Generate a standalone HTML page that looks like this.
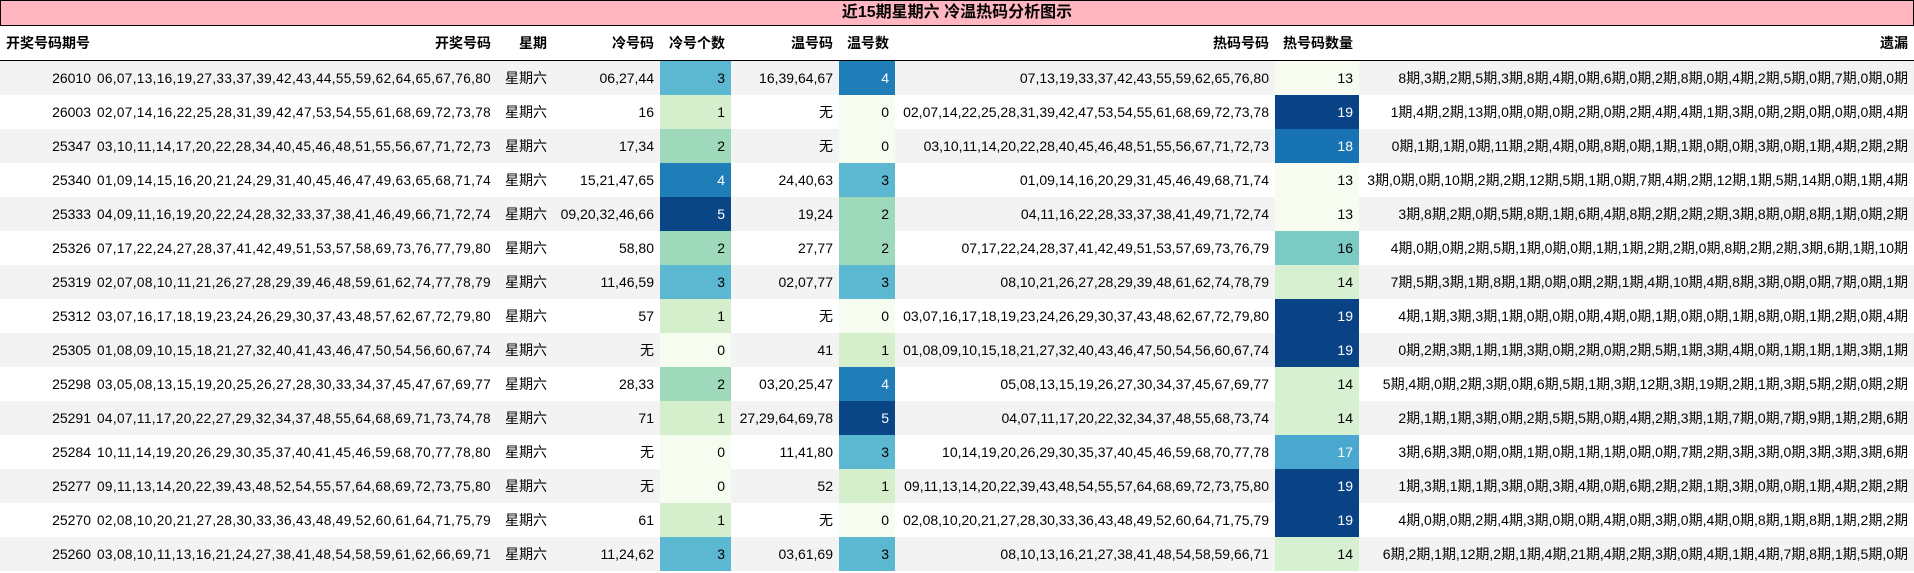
<!DOCTYPE html>
<html><head><meta charset="utf-8"><style>
html,body{margin:0;padding:0;background:#fff;width:1914px;height:573px;overflow:hidden}
body{font-family:"Liberation Sans","Noto Sans CJK SC",sans-serif;font-size:14px;color:#000}
.title{position:absolute;left:0;top:0;width:1912px;height:24px;background:#ffb6c1;border:1px solid #000;text-align:center;font-weight:bold;font-size:16px;line-height:24px}
table{position:absolute;left:0;top:26px;border-collapse:collapse;table-layout:fixed;width:1914px}
th{height:34px;border-bottom:1px solid #000;text-align:right;padding:0 6px 0 0;font-weight:bold;white-space:nowrap}
td{height:34px;padding:0 6px 0 0;text-align:right;white-space:nowrap;overflow:hidden}
tbody tr:nth-child(odd) td{background:#f3f3f3}
td span{display:inline-block;transform-origin:left center}
td.n span{letter-spacing:0.35px}
th:first-child{text-align:left;padding-left:6px}
</style></head><body>
<div class="title">近15期星期六 冷温热码分析图示</div>
<table>
<colgroup><col style="width:97px"><col style="width:400px"><col style="width:56px"><col style="width:107px"><col style="width:71px"><col style="width:108px"><col style="width:56px"><col style="width:380px"><col style="width:84px"><col style="width:555px"></colgroup>
<thead><tr><th>开奖号码期号</th><th>开奖号码</th><th>星期</th><th>冷号码</th><th>冷号个数</th><th>温号码</th><th>温号数</th><th>热码号码</th><th>热号码数量</th><th>遗漏</th></tr></thead>
<tbody id="tb"></tbody></table>
<script>
var C={0:'#f7fcf0',1:'#d5efcd',2:'#9fd9bb',3:'#5bb8d0',4:'#1f7db8',5:'#0a4586'};
var H={13:'#f7fcf0',14:'#d8f0d2',16:'#7bcbc4',17:'#4aa8d0',18:'#1873b4',19:'#094385'};
var D=[
["26010","06,07,13,16,19,27,33,37,39,42,43,44,55,59,62,64,65,67,76,80","06,27,44",3,"16,39,64,67",4,"07,13,19,33,37,42,43,55,59,62,65,76,80",13,"8期,3期,2期,5期,3期,8期,4期,0期,6期,0期,2期,8期,0期,4期,2期,5期,0期,7期,0期,0期"],
["26003","02,07,14,16,22,25,28,31,39,42,47,53,54,55,61,68,69,72,73,78","16",1,"无",0,"02,07,14,22,25,28,31,39,42,47,53,54,55,61,68,69,72,73,78",19,"1期,4期,2期,13期,0期,0期,0期,2期,0期,2期,4期,4期,1期,3期,0期,2期,0期,0期,0期,4期"],
["25347","03,10,11,14,17,20,22,28,34,40,45,46,48,51,55,56,67,71,72,73","17,34",2,"无",0,"03,10,11,14,20,22,28,40,45,46,48,51,55,56,67,71,72,73",18,"0期,1期,1期,0期,11期,2期,4期,0期,8期,0期,1期,1期,0期,0期,3期,0期,1期,4期,2期,2期"],
["25340","01,09,14,15,16,20,21,24,29,31,40,45,46,47,49,63,65,68,71,74","15,21,47,65",4,"24,40,63",3,"01,09,14,16,20,29,31,45,46,49,68,71,74",13,"3期,0期,0期,10期,2期,2期,12期,5期,1期,0期,7期,4期,2期,12期,1期,5期,14期,0期,1期,4期"],
["25333","04,09,11,16,19,20,22,24,28,32,33,37,38,41,46,49,66,71,72,74","09,20,32,46,66",5,"19,24",2,"04,11,16,22,28,33,37,38,41,49,71,72,74",13,"3期,8期,2期,0期,5期,8期,1期,6期,4期,8期,2期,2期,2期,3期,8期,0期,8期,1期,0期,2期"],
["25326","07,17,22,24,27,28,37,41,42,49,51,53,57,58,69,73,76,77,79,80","58,80",2,"27,77",2,"07,17,22,24,28,37,41,42,49,51,53,57,69,73,76,79",16,"4期,0期,0期,2期,5期,1期,0期,0期,1期,1期,2期,2期,0期,8期,2期,2期,3期,6期,1期,10期"],
["25319","02,07,08,10,11,21,26,27,28,29,39,46,48,59,61,62,74,77,78,79","11,46,59",3,"02,07,77",3,"08,10,21,26,27,28,29,39,48,61,62,74,78,79",14,"7期,5期,3期,1期,8期,1期,0期,0期,2期,1期,4期,10期,4期,8期,3期,0期,0期,7期,0期,1期"],
["25312","03,07,16,17,18,19,23,24,26,29,30,37,43,48,57,62,67,72,79,80","57",1,"无",0,"03,07,16,17,18,19,23,24,26,29,30,37,43,48,62,67,72,79,80",19,"4期,1期,3期,3期,1期,0期,0期,0期,4期,0期,1期,0期,0期,1期,8期,0期,1期,2期,0期,4期"],
["25305","01,08,09,10,15,18,21,27,32,40,41,43,46,47,50,54,56,60,67,74","无",0,"41",1,"01,08,09,10,15,18,21,27,32,40,43,46,47,50,54,56,60,67,74",19,"0期,2期,3期,1期,1期,3期,0期,2期,0期,2期,5期,1期,3期,4期,0期,1期,1期,1期,3期,1期"],
["25298","03,05,08,13,15,19,20,25,26,27,28,30,33,34,37,45,47,67,69,77","28,33",2,"03,20,25,47",4,"05,08,13,15,19,26,27,30,34,37,45,67,69,77",14,"5期,4期,0期,2期,3期,0期,6期,5期,1期,3期,12期,3期,19期,2期,1期,3期,5期,2期,0期,2期"],
["25291","04,07,11,17,20,22,27,29,32,34,37,48,55,64,68,69,71,73,74,78","71",1,"27,29,64,69,78",5,"04,07,11,17,20,22,32,34,37,48,55,68,73,74",14,"2期,1期,1期,3期,0期,2期,5期,5期,0期,4期,2期,3期,1期,7期,0期,7期,9期,1期,2期,6期"],
["25284","10,11,14,19,20,26,29,30,35,37,40,41,45,46,59,68,70,77,78,80","无",0,"11,41,80",3,"10,14,19,20,26,29,30,35,37,40,45,46,59,68,70,77,78",17,"3期,6期,3期,0期,0期,1期,0期,1期,1期,0期,0期,7期,2期,3期,3期,0期,3期,3期,3期,6期"],
["25277","09,11,13,14,20,22,39,43,48,52,54,55,57,64,68,69,72,73,75,80","无",0,"52",1,"09,11,13,14,20,22,39,43,48,54,55,57,64,68,69,72,73,75,80",19,"1期,3期,1期,1期,3期,0期,3期,4期,0期,6期,2期,2期,1期,3期,0期,0期,1期,4期,2期,2期"],
["25270","02,08,10,20,21,27,28,30,33,36,43,48,49,52,60,61,64,71,75,79","61",1,"无",0,"02,08,10,20,21,27,28,30,33,36,43,48,49,52,60,64,71,75,79",19,"4期,0期,0期,2期,4期,3期,0期,0期,4期,0期,3期,0期,4期,0期,8期,1期,8期,1期,2期,2期"],
["25260","03,08,10,11,13,16,21,24,27,38,41,48,54,58,59,61,62,66,69,71","11,24,62",3,"03,61,69",3,"08,10,13,16,21,27,38,41,48,54,58,59,66,71",14,"6期,2期,1期,12期,2期,1期,4期,21期,4期,2期,3期,0期,4期,1期,4期,7期,8期,1期,5期,0期"]];
var h='';
D.forEach(function(r){
 h+='<tr><td><span>'+r[0]+'</span></td><td class="n"><span>'+r[1]+'</span></td><td><span>星期六</span></td><td><span>'+r[2]+'</span></td>'+
 '<td style="background:'+C[r[3]]+';'+(r[3]>=4?'color:#fff':'')+'"><span>'+r[3]+'</span></td><td><span>'+r[4]+'</span></td>'+
 '<td style="background:'+C[r[5]]+';'+(r[5]>=4?'color:#fff':'')+'"><span>'+r[5]+'</span></td><td><span>'+r[6]+'</span></td>'+
 '<td style="background:'+H[r[7]]+';'+(r[7]>=17?'color:#fff':'')+'"><span>'+r[7]+'</span></td><td><span>'+r[8]+'</span></td></tr>';
});
document.getElementById('tb').innerHTML=h;
var spans=document.querySelectorAll('#tb td span');
var fix=[];
spans.forEach(function(s){
 var td=s.parentNode;var cs=getComputedStyle(td);
 var avail=td.clientWidth-parseFloat(cs.paddingLeft)-parseFloat(cs.paddingRight);
 var w=s.offsetWidth;
 if(w>avail){fix.push([s,avail,w]);}
});
fix.forEach(function(f){
 var s=f[0];
 s.style.width=f[2]+'px';
 s.style.transform='scaleX('+(f[1]/f[2])+')';
 s.parentNode.style.textAlign='left';
});
</script>
</body></html>
